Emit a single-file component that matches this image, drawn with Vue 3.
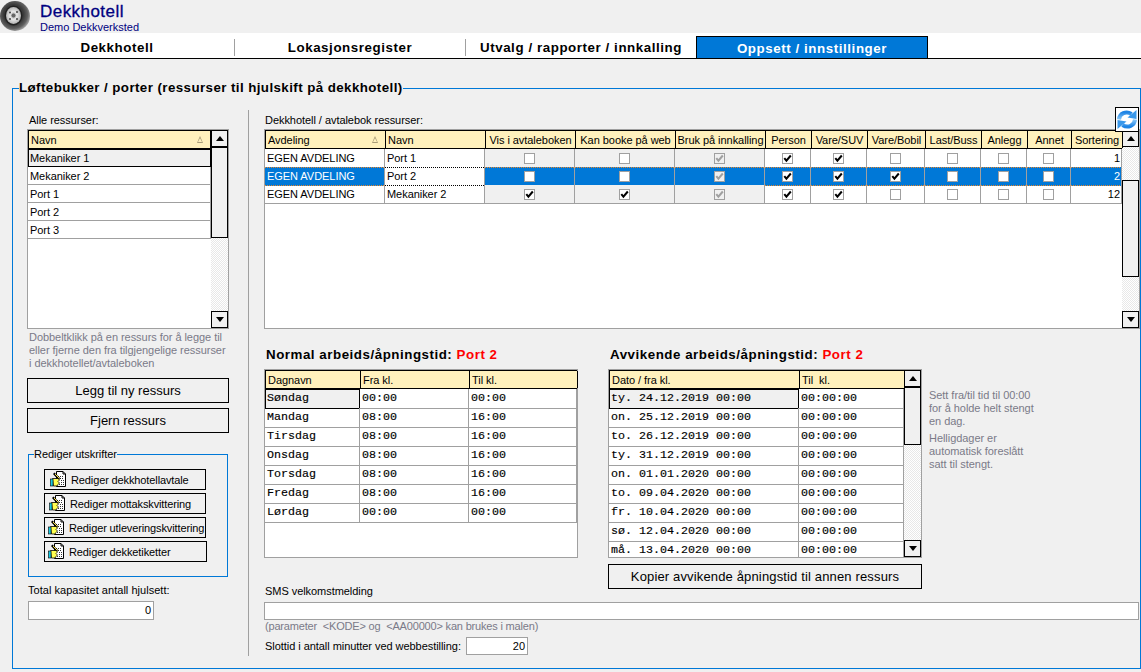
<script setup>
const tabs = [
  { t: 'Dekkhotell', c: 'w1' },
  { t: 'Lokasjonsregister', c: 'w2' },
  { t: 'Utvalg / rapporter / innkalling', c: 'w3' },
  { t: 'Oppsett / innstillinger', c: 'w4 active' }
]
const allRes = ['Mekaniker 1', 'Mekaniker 2', 'Port 1', 'Port 2', 'Port 3']
const printBtns = [
  { t: 'Rediger dekkhotellavtale', pad: 5, w: 162 },
  { t: 'Rediger mottakskvittering', pad: 4, w: 162 },
  { t: 'Rediger utleveringskvittering', pad: 3, w: 162 },
  { t: 'Rediger dekketiketter', pad: 3, w: 163 }
]
const heads = ['Vis i avtaleboken', 'Kan booke på web', 'Bruk på innkalling', 'Person', 'Vare/SUV', 'Vare/Bobil', 'Last/Buss', 'Anlegg', 'Annet']
const resRows = [
  { dep: 'EGEN AVDELING', name: 'Port 1', checks: [0, 0, 1, 1, 1, 0, 0, 0, 0], sort: 1, sel: false },
  { dep: 'EGEN AVDELING', name: 'Port 2', checks: [0, 0, 1, 1, 1, 1, 0, 0, 0], sort: 2, sel: true },
  { dep: 'EGEN AVDELING', name: 'Mekaniker 2', checks: [1, 1, 1, 1, 1, 0, 0, 0, 0], sort: 12, sel: false }
]
const normal = [
  ['Søndag', '00:00', '00:00'],
  ['Mandag', '08:00', '16:00'],
  ['Tirsdag', '08:00', '16:00'],
  ['Onsdag', '08:00', '16:00'],
  ['Torsdag', '08:00', '16:00'],
  ['Fredag', '08:00', '16:00'],
  ['Lørdag', '00:00', '00:00']
]
const special = [
  'ty. 24.12.2019 00:00',
  'on. 25.12.2019 00:00',
  'to. 26.12.2019 00:00',
  'ty. 31.12.2019 00:00',
  'on. 01.01.2020 00:00',
  'to. 09.04.2020 00:00',
  'fr. 10.04.2020 00:00',
  'sø. 12.04.2020 00:00',
  'må. 13.04.2020 00:00'
]
</script>

<template>
  <div class="page">
    <header class="top">
      <svg class="tire" width="32" height="32" viewBox="0 0 32 32">
        <defs>
          <radialGradient id="rub" cx="0.45" cy="0.45" r="0.55">
            <stop offset="0.6" stop-color="#3a3a3a" />
            <stop offset="0.85" stop-color="#606060" />
            <stop offset="1" stop-color="#9a9a9a" />
          </radialGradient>
          <radialGradient id="hub" cx="0.5" cy="0.5" r="0.5">
            <stop offset="0" stop-color="#8a8a8a" />
            <stop offset="0.45" stop-color="#e8e8e8" />
            <stop offset="1" stop-color="#b4b4b4" />
          </radialGradient>
        </defs>
        <circle cx="15" cy="16" r="15" fill="url(#rub)" />
        <ellipse cx="13.500" cy="15.500" rx="9" ry="10" fill="#222" />
        <ellipse cx="13.500" cy="15.500" rx="7.500" ry="8.500" fill="url(#hub)" />
        <circle cx="13.500" cy="15.500" r="2" fill="#666" />
        <circle cx="10" cy="12.500" r="1" fill="#444" />
        <circle cx="17" cy="12" r="1" fill="#444" />
        <circle cx="10" cy="19" r="1" fill="#444" />
        <circle cx="17" cy="19" r="1" fill="#444" />
      </svg>
      <div class="brand">
        <div class="brand-name">Dekkhotell</div>
        <div class="brand-sub">Demo Dekkverksted</div>
      </div>
    </header>

    <nav class="tabs">
      <div v-for="tab in tabs" :key="tab.t" class="tab" :class="tab.c"><span>{{ tab.t }}</span></div>
    </nav>

    <fieldset class="main">
      <legend>Løftebukker / porter (ressurser til hjulskift på dekkhotell)</legend>
      <div class="columns">
        <section class="left">
          <div class="lbl first">Alle ressurser:</div>
          <div class="gridbox listbox">
            <div class="col-main">
              <div class="hd list-hd"><div class="hc sortable">Navn<span class="sort-tri"></span></div></div>
              <div v-for="(r, i) in allRes" :key="r" class="list-row" :class="{ focus: i === 0 }">{{ r }}</div>
            </div>
            <div class="sb">
              <div class="sb-btn"><i class="up"></i></div>
              <div class="sb-thumb t-list"></div>
              <div class="sb-track"></div>
              <div class="sb-btn"><i class="down"></i></div>
            </div>
          </div>
          <p class="hint h-left">Dobbeltklikk på en ressurs for å legge til eller fjerne den fra tilgjengelige ressurser i dekkhotellet/avtaleboken</p>
          <button class="btn big first-btn">Legg til ny ressurs</button>
          <button class="btn big second-btn">Fjern ressurs</button>
          <fieldset class="prints">
            <legend>Rediger utskrifter</legend>
            <div class="print-list">
              <button v-for="b in printBtns" :key="b.t" class="btn pbtn" :style="{ paddingLeft: b.pad + 'px', width: b.w + 'px' }">
                <svg width="17" height="17" viewBox="0 0 17 17">
                  <path d="M6.500 0.500H13L15.500 3V15.500H6.500Z" fill="#fff" stroke="#000" />
                  <path d="M13 0.500V3H15.500" fill="none" stroke="#000" />
                  <path d="M8 5.500h6M10 7.500h4M11 9.500h3M11 11.500h3M9 13.500h5" stroke="#333" stroke-dasharray="1 1" />
                  <path d="M4.500 1.500l6 6-2 1.500-5.500-6z" fill="#000" />
                  <path d="M5 3l4.500 4.500" stroke="#ffe84a" />
                  <path d="M2.500 7.500H8l1.500 1.500L8 10.500l1.500 1.500-1.500 1.500-1 1.500H3.500z" fill="#ffff50" stroke="#000" stroke-width="0.8" />
                  <rect x="0.500" y="8" width="2.500" height="7" fill="#18c8e0" stroke="#000" stroke-width="0.6" />
                </svg>
                <span>{{ b.t }}</span>
              </button>
            </div>
          </fieldset>
          <div class="lbl cap-lbl">Total kapasitet antall hjulsett:</div>
          <div class="input cap-input">0</div>
        </section>

        <div class="divider"></div>

        <section class="right">
          <div class="res-top">
            <div class="lbl">Dekkhotell / avtalebok ressurser:</div>
            <button class="refresh" aria-label="Oppdater">
              <svg width="22" height="23" viewBox="0 0 22 23">
                <defs>
                  <linearGradient id="arr" x1="0" y1="0" x2="0" y2="1">
                    <stop offset="0" stop-color="#1f84e4" />
                    <stop offset="1" stop-color="#8ccaf9" />
                  </linearGradient>
                  <g id="half">
                    <path d="M3 11.500C3.500 5.500 10 2.500 15.500 6" fill="none" stroke="url(#arr)" stroke-width="4" />
                    <path d="M11.500 9.500L20.500 11V2Z" fill="#3a98ea" />
                  </g>
                </defs>
                <use href="#half" />
                <use href="#half" transform="rotate(180 11 11.500)" />
              </svg>
            </button>
          </div>
          <div class="gridbox resbox">
            <div class="col-main">
              <div class="hd res-cols">
                <div class="hc sortable">Avdeling<span class="sort-tri"></span></div>
                <div class="hc">Navn</div>
                <div v-for="h in heads" :key="h" class="hc ctr">{{ h }}</div>
                <div class="hc ctr">Sortering</div>
              </div>
              <div v-for="r in resRows" :key="r.name" class="res-cols res-row" :class="{ sel: r.sel }">
                <div class="c">{{ r.dep }}</div>
                <div class="c name">{{ r.name }}</div>
                <div v-for="(v, i) in r.checks" :key="i" class="c box" :class="{ shade: i < 3 }">
                  <span class="chk" :class="{ dis: i === 2 }">
                    <svg v-if="v" width="9" height="9" viewBox="0 0 9 9"><path d="M1.300 4.200L3.400 6.700 7.800 1.500" fill="none" stroke-width="2" /></svg>
                  </span>
                </div>
                <div class="c num">{{ r.sort }}</div>
              </div>
            </div>
            <div class="sb">
              <div class="sb-btn"><i class="up"></i></div>
              <div class="sb-track t-top"></div>
              <div class="sb-thumb t-res"></div>
              <div class="sb-track"></div>
              <div class="sb-btn"><i class="down"></i></div>
            </div>
          </div>

          <div class="tables">
            <div class="tcol">
              <h3 class="ttl">Normal arbeids/åpningstid: <em>Port 2</em></h3>
              <div class="gridbox tbox">
                <div class="col-main">
                  <div class="hd nor-cols thd">
                    <div class="hc">Dagnavn</div>
                    <div class="hc">Fra kl.</div>
                    <div class="hc">Til kl.</div>
                  </div>
                  <div v-for="(r, i) in normal" :key="r[0]" class="nor-cols trow">
                    <div class="m" :class="{ foc: i === 0 }">{{ r[0] }}</div>
                    <div class="m">{{ r[1] }}</div>
                    <div class="m">{{ r[2] }}</div>
                  </div>
                </div>
              </div>
            </div>
            <div class="tcol">
              <h3 class="ttl">Avvikende arbeids/åpningstid: <em>Port 2</em></h3>
              <div class="gridbox tbox">
                <div class="col-main clip">
                  <div class="hd spc-cols thd">
                    <div class="hc">Dato / fra kl.</div>
                    <div class="hc">Til&nbsp; kl.</div>
                  </div>
                  <div v-for="(r, i) in special" :key="r" class="spc-cols trow">
                    <div class="m" :class="{ foc: i === 0 }">{{ r }}</div>
                    <div class="m">00:00:00</div>
                  </div>
                </div>
                <div class="sb">
                  <div class="sb-btn"><i class="up"></i></div>
                  <div class="sb-thumb t-spc"></div>
                  <div class="sb-track"></div>
                  <div class="sb-btn"><i class="down"></i></div>
                </div>
              </div>
              <button class="btn big copy-btn">Kopier avvikende åpningstid til annen ressurs</button>
            </div>
            <div class="side hint">
              <p>Sett fra/til tid til 00:00 for å holde helt stengt en dag.</p>
              <p>Helligdager er automatisk foreslått satt til stengt.</p>
            </div>
          </div>

          <div class="sms">
            <div class="lbl">SMS velkomstmelding</div>
            <div class="input sms-input"></div>
            <div class="hint sms-hint">(parameter &nbsp;&lt;KODE&gt; og &nbsp;&lt;AA00000&gt; kan brukes i malen)</div>
            <div class="slot">
              <span class="lbl slot-lbl">Slottid i antall minutter ved webbestilling:</span>
              <div class="input slot-input">20</div>
            </div>
          </div>
        </section>
      </div>
    </fieldset>
  </div>
</template>

<style scoped>
.page {
  width: 1141px;
  height: 672px;
  overflow: hidden;
  background: #f0f0f0;
  color: #000;
  font-family: "Liberation Sans", Arial, sans-serif;
  font-size: 11px;
  letter-spacing: -0.05px;
}
.top {
  height: 33px;
  display: flex;
  align-items: flex-start;
}
.tire {
  flex: none;
  margin-right: 8px;
}
.brand {
  padding-top: 3px;
  color: #000080;
}
.brand-name {
  font-size: 17px;
  line-height: 18px;
  -webkit-text-stroke: 0.3px #000080;
  letter-spacing: 0.45px;
}
.brand-sub {
  font-size: 11px;
  line-height: 12px;
  letter-spacing: 0;
}

.tabs {
  height: 26px;
  box-sizing: border-box;
  background: #fff;
  border-bottom: 1px solid #000;
  display: flex;
  align-items: flex-end;
}
.tab {
  height: 17px;
  box-sizing: border-box;
  display: flex;
  align-items: center;
  justify-content: center;
  font-weight: bold;
  font-size: 13.330px;
  letter-spacing: 0.57px;
  margin-bottom: 2px;
  border-right: 1px solid #a0a0a0;
}
.w1 { width: 235px; }
.w2 { width: 231px; }
.w3 { width: 230px; border-right: 0; }
.w4 { width: 232px; border-right: 0; }
.tab.active {
  height: 22px;
  margin-bottom: 0;
  padding-top: 1px;
  background: #0078d7;
  color: #fff;
  border: 1px solid #000;
  border-bottom: 0;
}

.main {
  margin: 21px 0 0 12px;
  padding: 0;
  width: 1129px;
  height: 589px;
  box-sizing: border-box;
  border: 1px solid #0078d7;
  min-width: 0;
}
.main > legend {
  margin-left: 6px;
  padding: 0;
  font-weight: bold;
  font-size: 13.330px;
  line-height: 16px;
  letter-spacing: 0.42px;
}
.columns {
  display: flex;
  padding: 14px 0 0 14px;
}
.left {
  width: 202px;
  flex: none;
}
.divider {
  width: 1px;
  height: 546px;
  flex: none;
  background: #a0a0a0;
  margin-left: 19px;
}
.right {
  margin-left: 15px;
  width: 876px;
  flex: none;
}
.lbl {
  color: #000;
  line-height: 14px;
  height: 14px;
}
.lbl.first { padding-left: 2px; margin-top: 3px; margin-bottom: 2px; }

.gridbox {
  display: flex;
  border: 1px solid #a0a0a0;
  background: #fff;
  box-sizing: border-box;
}
.col-main {
  flex: 1;
  min-width: 0;
}
.clip { overflow: hidden; }
.hd {
  background: #fff1bd;
  border: 1px solid #000;
  border-width: 1px 0 1px 1px;
  box-sizing: border-box;
}
.hc {
  border-right: 1px solid #000;
  padding-left: 2px;
  white-space: nowrap;
  overflow: hidden;
  display: flex;
  align-items: center;
  position: relative;
  box-sizing: border-box;
}
.ctr { justify-content: center; padding-left: 0; }
.sort-tri {
  position: absolute;
  right: 7px;
  top: 5px;
  width: 0;
  height: 0;
  border: 3.500px solid transparent;
  border-top: 0;
  border-bottom: 7px solid #a89c78;
}
.sort-tri::after {
  content: "";
  position: absolute;
  left: -2px;
  top: 2px;
  border: 2px solid transparent;
  border-top: 0;
  border-bottom: 4px solid #fff1bd;
}
.listbox {
  height: 200px;
}
.list-hd {
  height: 19px;
  display: flex;
}
.list-hd .hc { width: 100%; }
.list-row {
  height: 18px;
  box-sizing: border-box;
  border-bottom: 1px solid #a0a0a0;
  border-right: 1px solid #a0a0a0;
  padding-left: 2px;
  line-height: 18px;
}
.list-row.focus {
  background: #f0f0f0;
  border: 1px solid #000;
  padding-left: 1px;
  line-height: 16px;
}

.sb {
  width: 17px;
  flex: none;
  display: flex;
  flex-direction: column;
  background: repeating-conic-gradient(#fff 0 25%, #e8e8e8 0 50%) 0 0 / 2px 2px;
}
.sb-btn {
  height: 17px;
  flex: none;
  box-sizing: border-box;
  border: 1px solid #000;
  background: #f0f0f0;
  display: flex;
  align-items: center;
  justify-content: center;
}
.sb-btn i {
  width: 0;
  height: 0;
  border-left: 4.500px solid transparent;
  border-right: 4.500px solid transparent;
}
.sb-btn i.up { border-bottom: 5px solid #000; }
.sb-btn i.down { border-top: 5px solid #000; }
.sb-track { flex: 1; }
.t-top { flex: none; height: 33px; }
.sb-thumb {
  flex: none;
  box-sizing: border-box;
  border: 1px solid #000;
  background: #f0f0f0;
}
.t-list { height: 91px; }
.t-res { height: 97px; }
.t-spc { height: 58px; }

.hint {
  color: #7a7a88;
  margin: 0;
  line-height: 13px;
}
.h-left {
  margin: 2px 0 0 2px;
  width: 200px;
}
.btn {
  display: flex;
  align-items: center;
  justify-content: center;
  background: #f0f0f0;
  border: 1px solid #000;
  box-sizing: border-box;
  padding: 0;
  color: #000;
  font: inherit;
  letter-spacing: inherit;
}
.big {
  width: 202px;
  height: 25px;
  font-size: 13px;
  letter-spacing: 0;
}
.first-btn { margin-top: 8px; }
.second-btn { margin-top: 5px; }
.prints {
  margin: 14px 0 0 1px;
  padding: 0;
  width: 200px;
  height: 130px;
  box-sizing: border-box;
  border: 1px solid #0078d7;
  min-width: 0;
}
.prints > legend {
  margin-left: 5px;
  padding: 0;
  font-size: 11px;
  line-height: 14px;
}
.print-list {
  display: flex;
  flex-direction: column;
  gap: 3px;
  padding: 8px 0 0 15px;
}
.pbtn {
  height: 21px;
  justify-content: flex-start;
  gap: 4px;
  white-space: nowrap;
  letter-spacing: -0.12px;
}
.pbtn svg { flex: none; }
.cap-lbl { margin: 6px 0 0 1px; letter-spacing: 0.03px; }
.input {
  background: #fff;
  border: 1px solid #a0a0a0;
  box-sizing: border-box;
  text-align: right;
}
.cap-input {
  margin: 4px 0 0 1px;
  width: 126px;
  height: 19px;
  line-height: 17px;
  padding-right: 2px;
}

.res-top {
  height: 19px;
  display: flex;
  justify-content: space-between;
  align-items: flex-end;
  position: relative;
}
.res-top .lbl { padding-left: 1px; margin-bottom: 2px; }
.refresh {
  position: absolute;
  right: 1px;
  top: -3px;
  width: 24px;
  height: 25px;
  background: #fff;
  border: 1px solid #000;
  padding: 0;
  display: flex;
}
.resbox { height: 200px; }
.res-cols {
  display: grid;
  grid-template-columns: 120px 100px 90px 100px 90px 46px 56px 58px 56px 46px 44px 51px;
}
.hd.res-cols { height: 19px; }
.res-row { height: 18px; }
.c {
  box-sizing: border-box;
  border-right: 1px solid #a0a0a0;
  border-bottom: 1px solid #a0a0a0;
  padding-left: 2px;
  line-height: 18px;
  white-space: nowrap;
}
.c.box {
  padding: 0;
  display: flex;
  align-items: center;
  justify-content: center;
}
.c.shade { background-color: #f0f0f0; }
.c.num { text-align: right; padding-right: 1px; }
.chk {
  width: 9px;
  height: 9px;
  border: 1px solid #a0a0a0;
  background: #fff;
  display: block;
  stroke: #000;
}
.chk svg { display: block; }
.chk.dis { background: #f0f0f0; stroke: #a0a0a0; }
.res-row.sel .c {
  background-color: #0078d7;
  color: #fff;
  border-bottom: 0;
  line-height: 19px;
  background-image:
    repeating-linear-gradient(90deg, #e8862a 0 1px, transparent 1px 2px),
    repeating-linear-gradient(90deg, #e8862a 0 1px, transparent 1px 2px);
  background-size: 100% 1px, 100% 1px;
  background-position: 0 0, 0 100%;
  background-repeat: no-repeat;
}
.res-row.sel .c.name {
  background-color: #fff;
  color: #000;
  background-image:
    repeating-linear-gradient(90deg, #000 0 1px, transparent 1px 2px),
    repeating-linear-gradient(90deg, #000 0 1px, transparent 1px 2px);
}

.tables {
  display: flex;
  margin-top: 18px;
  height: 242px;
}
.tcol {
  width: 314px;
  flex: none;
  margin-right: 30px;
}
.tcol + .tcol { margin-right: 7px; }
.ttl {
  margin: 0 0 6px 2px;
  height: 16px;
  font-size: 13.330px;
  line-height: 16px;
  font-weight: bold;
  letter-spacing: 0.53px;
  white-space: nowrap;
}
.ttl em {
  font-style: normal;
  color: #f00;
}
.tbox { height: 189px; }
.nor-cols {
  display: grid;
  grid-template-columns: 95px 109px 108px;
}
.spc-cols {
  display: grid;
  grid-template-columns: 190px 105px;
}
.thd { height: 19px; }
.trow { height: 19px; }
.m {
  box-sizing: border-box;
  border-right: 1px solid #a0a0a0;
  border-bottom: 1px solid #a0a0a0;
  font-family: "Liberation Mono", "Courier New", monospace;
  font-size: 11.670px;
  letter-spacing: 0;
  line-height: 19px;
  padding-left: 2px;
  white-space: pre;
  -webkit-text-stroke: 0.15px #000;
}
.m.foc {
  background: #f0f0f0;
  border: 1px solid #000;
  padding-left: 1px;
  line-height: 17px;
}
.copy-btn {
  width: 314px;
  margin-top: 6px;
  letter-spacing: 0.15px;
}
.side {
  padding-top: 42px;
  width: 114px;
}
.side p { margin: 0 0 4px; }

.sms {
  margin-top: -5px;
}
.sms > .lbl { padding-left: 1px; }
.sms-input {
  margin-top: 4px;
  width: 875px;
  height: 18px;
}
.sms-hint {
  margin: 0 0 0 1px;
  height: 13px;
  letter-spacing: -0.18px;
}
.slot {
  display: flex;
  align-items: center;
  margin: 4px 0 0 1px;
}
.slot-lbl {
  width: 201px;
  flex: none;
}
.slot-input {
  width: 62px;
  height: 18px;
  line-height: 16px;
  padding-right: 2px;
}
</style>

<style>
html, body { margin: 0; background: #f0f0f0; }
</style>
